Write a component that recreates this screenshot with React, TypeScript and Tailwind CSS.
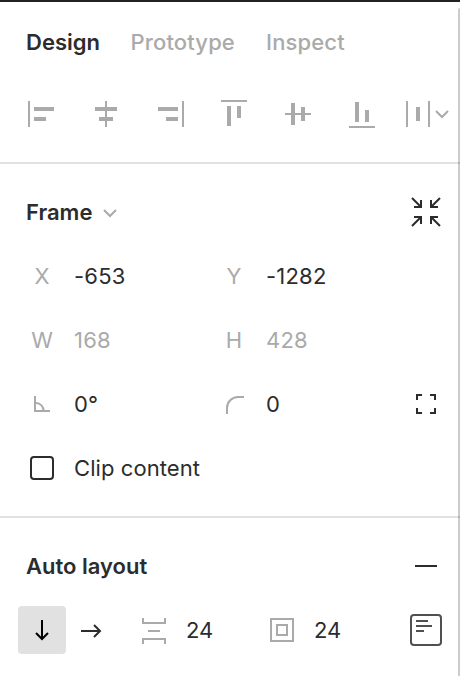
import type { ReactNode } from 'react';

type Rect = [number, number, number, number];

const alignIcons: Rect[][] = [
  [[18, 19, 2, 26], [24, 25, 20, 4], [24, 35, 12, 4]],
  [[31, 19, 2, 26], [21, 25, 22, 4], [25, 35, 14, 4]],
  [[44, 19, 2, 26], [20, 25, 20, 4], [28, 35, 12, 4]],
  [[19, 18, 26, 2], [25, 24, 4, 20], [35, 24, 4, 12]],
  [[19, 31, 26, 2], [25, 21, 4, 22], [35, 25, 4, 14]],
  [[19, 44, 26, 2], [25, 20, 4, 20], [35, 28, 4, 12]],
  [[12, 19, 2, 26], [34, 19, 2, 26], [22, 25, 4, 14]],
];

function Icon({ className, size = 32, children }: { className?: string; size?: number; children: ReactNode }) {
  return (
    <svg
      className={`shrink-0 ${className ?? ''}`}
      width={size}
      height={size}
      viewBox={`0 0 ${size} ${size}`}
      fill="none"
      stroke="currentColor"
      strokeWidth="2"
    >
      {children}
    </svg>
  );
}

function Field({ label, value, muted }: { label: ReactNode; value: string; muted?: boolean }) {
  return (
    <div className="flex w-48 items-center">
      <div className="flex w-8 justify-center text-[#aaaaaa]">{label}</div>
      <span className={muted ? 'ml-4 tracking-[0.2px] text-[#aaaaaa]' : 'ml-4 tracking-[0.2px]'}>{value}</span>
    </div>
  );
}

export default function App() {
  return (
    <div className="relative h-[676px] w-[460px] overflow-hidden border-t-2 border-[#222222] bg-white font-['Inter',sans-serif] text-[22px] leading-8 text-[#2c2c2c]">
      <nav className="flex h-20 items-center pl-[26px] font-medium text-[#aaaaaa]">
        <span className="w-[104.5px] font-semibold text-[#2c2c2c]">Design</span>
        <span className="w-[135.5px] tracking-[0.14px]">Prototype</span>
        <span className="tracking-[0.14px]">Inspect</span>
      </nav>

      <div className="flex h-20 pl-2.5 text-[#aaaaaa]">
        {alignIcons.map((rects, i) => (
          <Icon key={i} size={64}>
            {rects.map(([x, y, w, h]) => (
              <rect key={`${x}-${y}`} x={x} y={y} width={w} height={h} fill="currentColor" stroke="none" />
            ))}
            {i === 6 && <path d="M42 29l6 6 6-6" />}
          </Icon>
        ))}
      </div>

      <section className="h-[354px] border-t-2 border-[#e1e1e1] pt-4 pl-[26px]">
        <div className="flex h-16 items-center">
          <h2 className="font-semibold">Frame</h2>
          <Icon className="ml-0.5 text-[#aaaaaa]">
            <path d="M10 14l6 6 6-6" />
          </Icon>
          <Icon className="mr-[18px] ml-auto">
            <path d="M2 2l9 9M4 11h7V4M30 2l-9 9M28 11h-7V4M2 30l9-9M4 21h7v7M30 30l-9-9M28 21h-7v7" />
          </Icon>
        </div>
        <div className="flex h-16 items-center">
          <Field label="X" value="-653" />
          <Field label="Y" value="-1282" />
        </div>
        <div className="flex h-16 items-center">
          <Field label="W" value="168" muted />
          <Field label="H" value="428" muted />
        </div>
        <div className="flex h-16 items-center">
          <Field
            label={
              <Icon>
                <path d="M9 8v15h15M10 15a7.5 7.5 0 0 1 7.5 8" />
              </Icon>
            }
            value="0°"
          />
          <Field
            label={
              <Icon>
                <path d="M9 26v-6A11 11 0 0 1 20 9h6" />
              </Icon>
            }
            value="0"
          />
          <Icon className="mr-[18px] ml-auto">
            <path d="M7 12V7h5M20 7h5v5M25 20v5h-5M12 25H7v-5" />
          </Icon>
        </div>
        <label className="flex h-16 items-center">
          <span className="ml-1 size-6 rounded border-2 border-[#2c2c2c]" />
          <span className="ml-5 tracking-[0.08px]">Clip content</span>
        </label>
      </section>

      <section className="border-t-2 border-[#e1e1e1] pt-4">
        <div className="flex h-16 items-center pr-[18px] pl-[26px]">
          <h2 className="font-semibold">Auto layout</h2>
          <Icon className="ml-auto">
            <path d="M5 16h22" />
          </Icon>
        </div>
        <div className="flex h-16 items-center pr-[18px] pl-[18px]">
          <div className="flex size-12 items-center justify-center rounded bg-[#e1e1e1] text-black">
            <Icon>
              <path d="M16 6v19M10 19l6 6 6-6" />
            </Icon>
          </div>
          <Icon className="ml-2">
            <path d="M7 17h19M20 11l6 6-6 6" />
          </Icon>
          <Icon className="ml-8 text-[#aaaaaa]">
            <path d="M5 4v5h22V4M10 17h12M5 30v-5h22v5" />
          </Icon>
          <span className="ml-4 w-20">24</span>
          <Icon className="text-[#aaaaaa]">
            <rect x="5" y="5" width="22" height="22" />
            <rect x="11" y="11" width="10" height="10" />
          </Icon>
          <span className="ml-4">24</span>
          <Icon className="ml-auto text-[#505050]">
            <rect x="1" y="1" width="30" height="30" rx="3" />
            <path d="M6 7h12M6 12h16M6 17h8" />
          </Icon>
        </div>
      </section>

      <div className="absolute top-1.5 right-0 bottom-0 w-0.5 rounded-tl-sm bg-black/20" />
    </div>
  );
}
